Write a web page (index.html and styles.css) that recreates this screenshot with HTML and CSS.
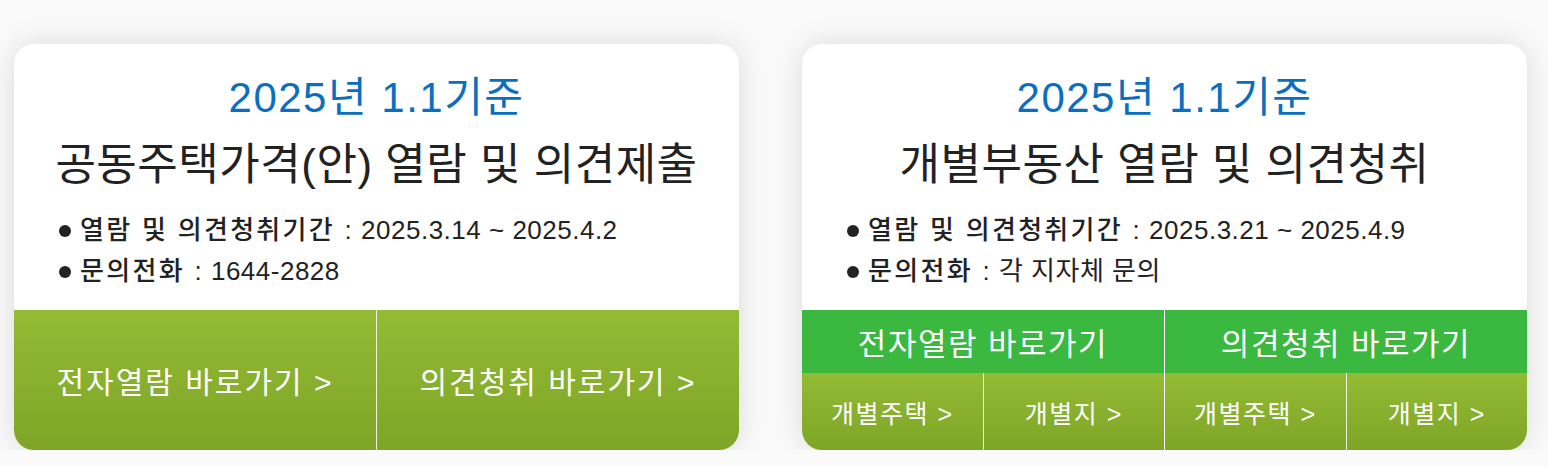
FILE: index.html
```html
<!DOCTYPE html>
<html lang="ko">
<head>
    <meta charset="utf-8">
    <title>부동산 가격 열람</title>
    <link rel="stylesheet" href="styles.css">
</head>
<body>
    <div class="cards">
        <div class="card">
            <div class="card-top">
                <p class="base-date">2025년 1.1기준</p>
                <h2 class="card-title">공동주택가격(안) 열람 및 의견제출</h2>
                <ul class="info">
                    <li><span class="label">열람 및 의견청취기간 :</span> 2025.3.14 ~ 2025.4.2</li>
                    <li><span class="label">문의전화 :</span> 1644-2828</li>
                </ul>
            </div>
            <div class="links">
                <a class="link-big" href="#">전자열람 바로가기 &gt;</a>
                <a class="link-big" href="#">의견청취 바로가기 &gt;</a>
            </div>
        </div>

        <div class="card">
            <div class="card-top">
                <p class="base-date">2025년 1.1기준</p>
                <h2 class="card-title">개별부동산 열람 및 의견청취</h2>
                <ul class="info">
                    <li><span class="label">열람 및 의견청취기간 :</span> 2025.3.21 ~ 2025.4.9</li>
                    <li><span class="label">문의전화 :</span> 각 지자체 문의</li>
                </ul>
            </div>
            <div class="links">
                <div class="link-group">
                    <div class="group-head">전자열람 바로가기</div>
                    <div class="group-items">
                        <a href="#">개별주택 &gt;</a>
                        <a href="#">개별지 &gt;</a>
                    </div>
                </div>
                <div class="link-group">
                    <div class="group-head">의견청취 바로가기</div>
                    <div class="group-items">
                        <a href="#">개별주택 &gt;</a>
                        <a href="#">개별지 &gt;</a>
                    </div>
                </div>
            </div>
        </div>
    </div>
</body>
</html>
```

FILE: styles.css
```css
body {
    margin: 0;
    background-color: #fafafa;
    font-family: "Liberation Sans", "Noto Sans CJK KR", sans-serif;
}
.cards {
    display: flex;
    gap: 63px;
    padding: 44px 0 0 14px;
}
.card {
    width: 725px;
    height: 406px;
    background-color: white;
    border-radius: 20px;
    box-shadow: 0px 0px 30px 0px rgba(0,0,0,0.13);
    overflow: hidden;
    display: flex;
    flex-direction: column;
}
.card-top {
    height: 266px;
    flex-shrink: 0;
}
.base-date {
    margin: 30px 0 0;
    line-height: 48px;
    font-size: 42px;
    letter-spacing: 1.5px;
    color: #0b6fc0;
    text-align: center;
}
.card-title {
    margin: 14px 0 0;
    line-height: 58px;
    font-size: 44px;
    font-weight: normal;
    color: #222;
    text-align: center;
    letter-spacing: 0.5px;
}
.info {
    list-style: none;
    margin: 16px 0 0;
    padding: 0 0 0 45px;
    font-size: 26px;
    letter-spacing: 0.5px;
    color: #222;
}
.info li {
    line-height: 41px;
    display: flex;
    align-items: center;
    gap: 7px;
}
.info li::before {
    content: "";
    width: 12px;
    height: 12px;
    border-radius: 50%;
    background-color: #222;
    margin-right: 2px;
}
.info .label {
    font-weight: 500;
    letter-spacing: 2.3px;
}
.links {
    flex: 1;
    display: flex;
}
.links a {
    color: white;
    text-decoration: none;
}
.link-big {
    flex: 1;
    display: flex;
    align-items: center;
    justify-content: center;
    font-size: 30px;
    letter-spacing: 2px;
    background: linear-gradient(#93bb35, #7ea526);
}
.link-big + .link-big {
    border-left: 1px solid rgba(255,255,255,0.85);
}
.link-group {
    flex: 1;
    display: flex;
    flex-direction: column;
}
.link-group + .link-group {
    border-left: 1px solid rgba(255,255,255,0.85);
}
.group-head {
    height: 63px;
    display: flex;
    align-items: center;
    justify-content: center;
    background-color: #3ab840;
    color: white;
    font-size: 31px;
    letter-spacing: 1.5px;
}
.group-items {
    flex: 1;
    display: flex;
    background: linear-gradient(#93bb35, #7ea526);
}
.group-items a {
    flex: 1;
    display: flex;
    align-items: center;
    justify-content: center;
    font-size: 25px;
    letter-spacing: 1.5px;
}
.group-items a + a {
    border-left: 1px solid rgba(255,255,255,0.85);
}
```
